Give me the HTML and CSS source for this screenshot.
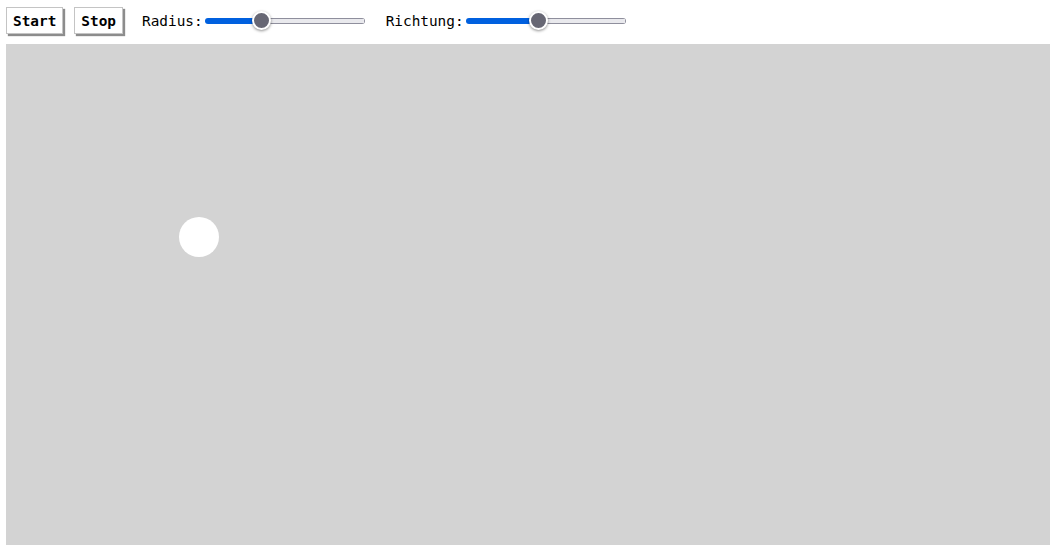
FILE: index.html
```html
<!DOCTYPE html>
<html lang="de">
<head>
<meta charset="utf-8">
<title>Ball</title>
<link rel="stylesheet" href="styles.css">
</head>
<body>
<div class="toolbar">
  <button class="btn">Start</button>
  <button class="btn">Stop</button>
  <label class="field field-radius">Radius:<input class="slider" type="range" min="5" max="50" value="20" style="--p:35.6%"></label>
  <label class="field">Richtung:<input class="slider" type="range" min="0" max="360" value="162" style="--p:45.6%"></label>
</div>
<div class="stage">
  <svg class="ball" width="40" height="40" viewBox="0 0 40 40"><circle cx="20" cy="20" r="20" fill="#fff"/></svg>
</div>
</body>
</html>
```
FILE: styles.css
```css
html, body {
  margin: 0;
  padding: 0;
  background: #fff;
  overflow: hidden;
}
body {
  padding: 0 4px 0 6px;
  font-family: "DejaVu Sans Mono", monospace;
  font-size: 14.4px;
  color: #000;
}
.toolbar {
  display: flex;
  align-items: center;
  height: 41px;
  margin-bottom: 3px;
}
.btn {
  font: bold 14.4px "DejaVu Sans Mono", monospace;
  color: #000;
  background: #fff;
  border: 1px solid #c4c4c4;
  padding: 3px 6px;
  height: 27px;
  margin: 0 11px 0 0;
  box-shadow: 2px 2px 1px rgba(0, 0, 0, 0.45);
  cursor: pointer;
}
.field {
  display: flex;
  align-items: center;
  margin-left: 8px;
  margin-right: 13px;
}
.field-radius {
  margin-left: 8px;
  margin-right: 13px;
}
.slider {
  -webkit-appearance: none;
  appearance: none;
  width: 160px;
  height: 22px;
  margin: 0 0 0 2px;
  background: transparent;
}
.slider::-webkit-slider-runnable-track {
  height: 6px;
  border-radius: 3px;
  background:
    linear-gradient(#0060df, #0060df) 0 0 / var(--p) 100% no-repeat,
    linear-gradient(#e9e9ed, #e9e9ed) 1px 1px / calc(100% - 2px) calc(100% - 2px) no-repeat,
    #8f8f9d;
}
.slider::-webkit-slider-thumb {
  -webkit-appearance: none;
  appearance: none;
  width: 19px;
  height: 19px;
  margin-top: -6.5px;
  border-radius: 50%;
  background: #676774;
  border: 2px solid #fff;
  box-shadow: 0 1px 3px rgba(0, 0, 0, 0.45);
}
.stage {
  position: relative;
  width: 1044px;
  height: 510px;
  background: #d3d3d3;
}
.ball {
  position: absolute;
  left: 173px;
  top: 173px;
  display: block;
}
```
